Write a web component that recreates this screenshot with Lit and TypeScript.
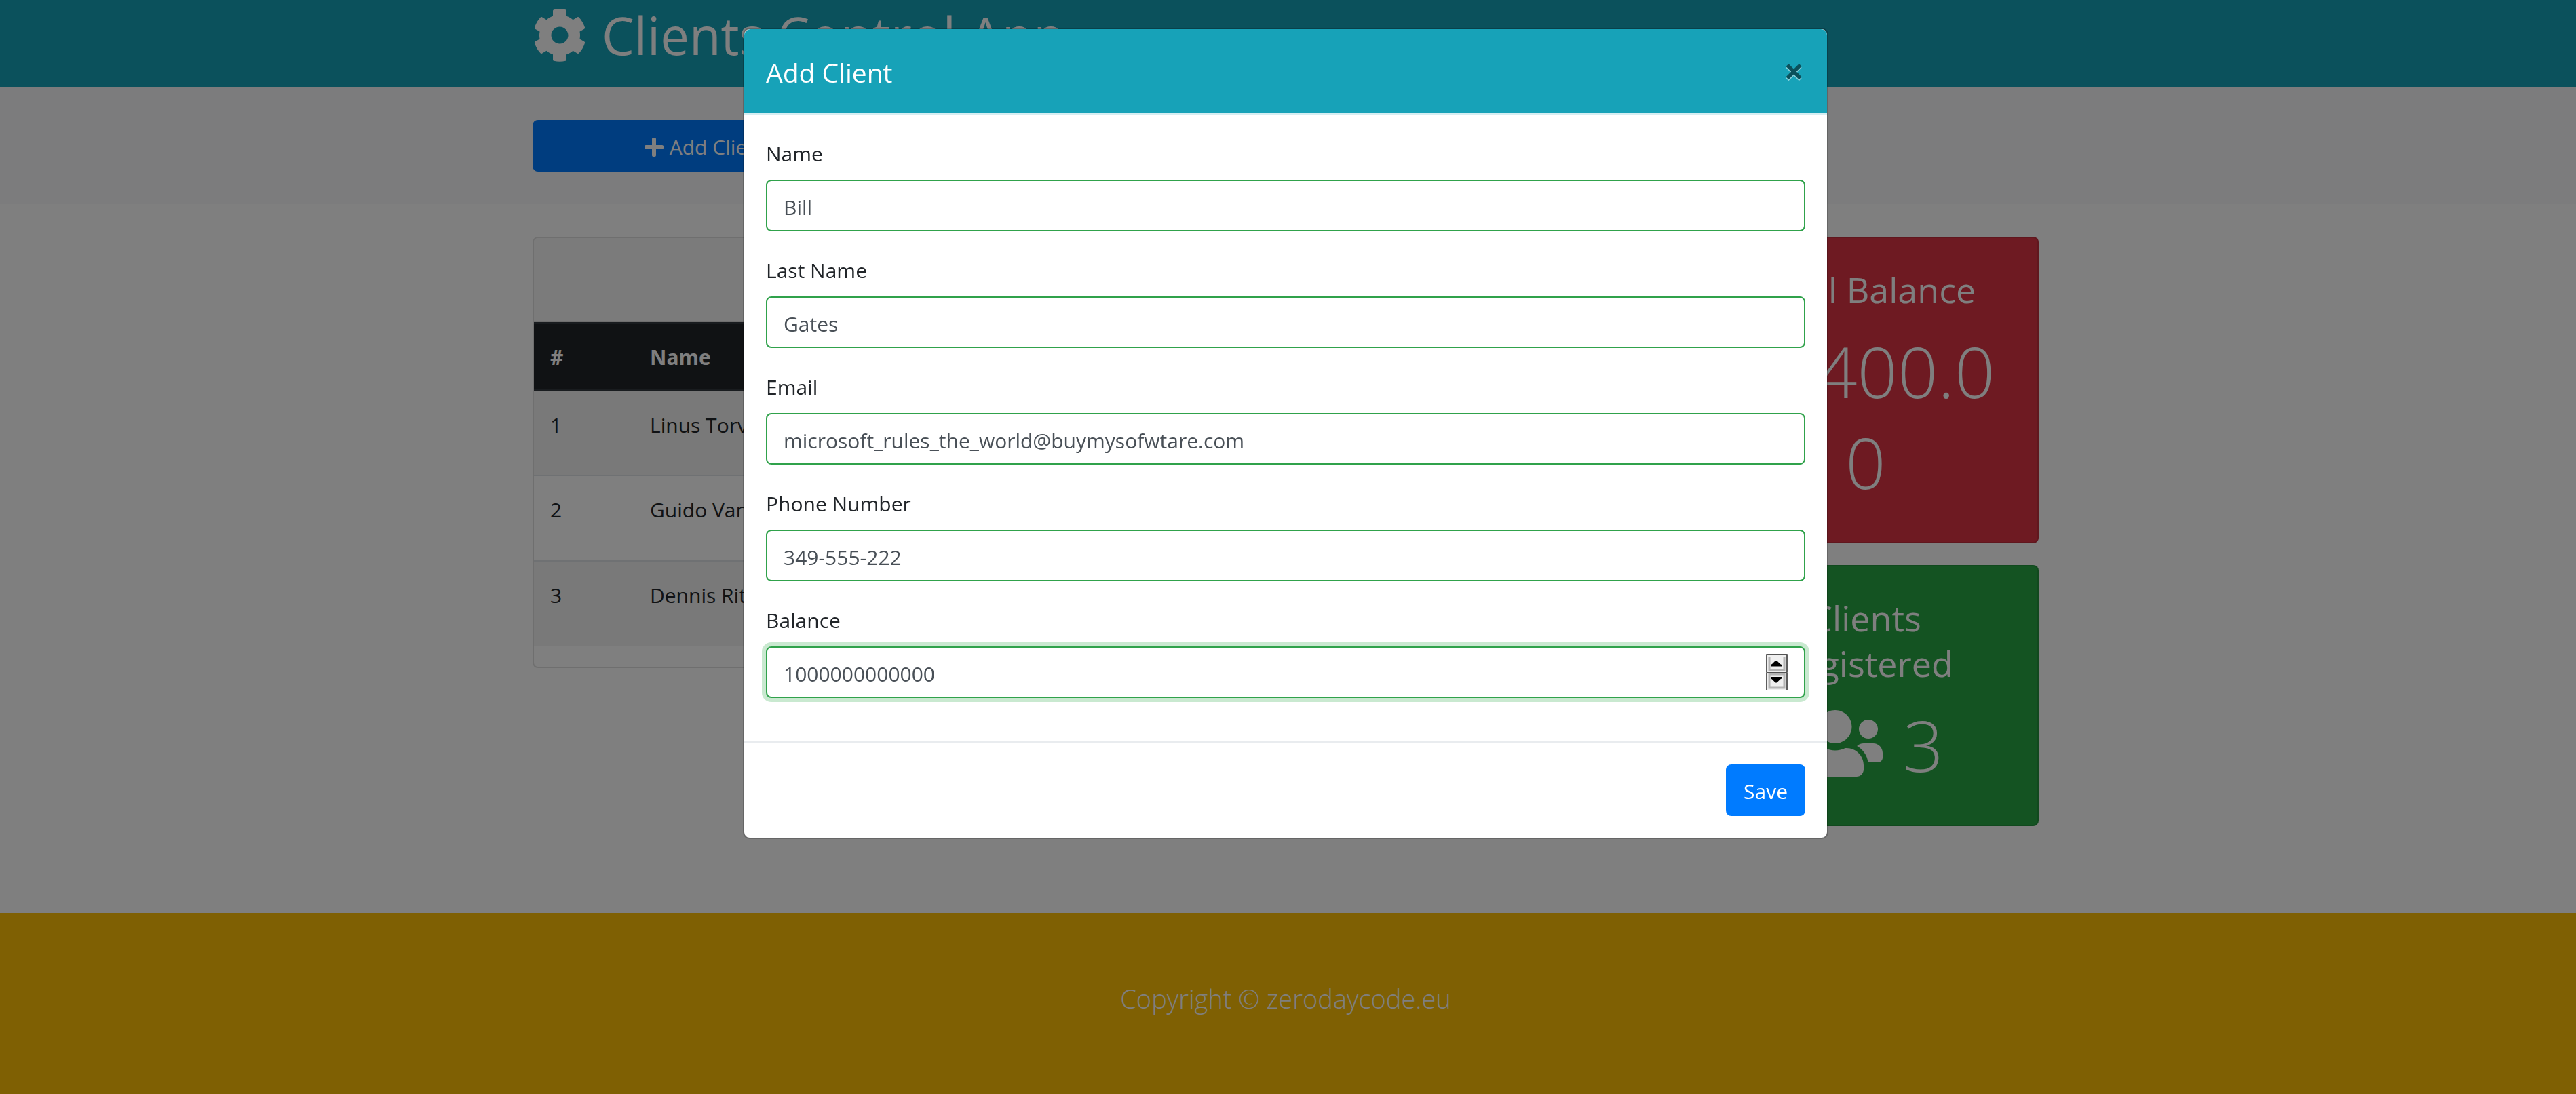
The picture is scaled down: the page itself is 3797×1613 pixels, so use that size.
import { LitElement, html, css, svg } from "lit";
import { customElement, state } from "lit/decorators.js";

interface Client {
  id: number;
  name: string;
  balance: string;
}

interface Field {
  id: string;
  label: string;
  type: string;
  value: string;
}

const CLIENTS: Client[] = [
  { id: 1, name: "Linus Torvalds", balance: "5000.00" },
  { id: 2, name: "Guido Van Rossum", balance: "4400.00" },
  { id: 3, name: "Dennis Ritchie", balance: "6000.00" },
];

const FIELDS: Field[] = [
  { id: "name", label: "Name", type: "text", value: "Bill" },
  { id: "last-name", label: "Last Name", type: "text", value: "Gates" },
  { id: "email", label: "Email", type: "email", value: "microsoft_rules_the_world@buymysofwtare.com" },
  { id: "phone", label: "Phone Number", type: "tel", value: "349-555-222" },
];

const cog = svg`<path d="M487.4 315.7l-42.6-24.6c4.3-23.2 4.3-47 0-70.2l42.6-24.6c4.9-2.8 7.1-8.6 5.5-14-11.1-35.6-30-67.8-54.7-94.6-3.8-4.1-10-5.1-14.8-2.3L380.8 110c-17.9-15.4-38.5-27.3-60.8-35.1V25.8c0-5.6-3.9-10.5-9.4-11.7-36.7-8.2-74.3-7.8-109.2 0-5.5 1.2-9.4 6.1-9.4 11.7V75c-22.2 7.9-42.8 19.8-60.8 35.1L88.7 85.5c-4.9-2.8-11-1.9-14.8 2.3-24.7 26.7-43.6 58.9-54.7 94.6-1.7 5.4.6 11.2 5.5 14L67.3 221c-4.3 23.2-4.3 47 0 70.2l-42.6 24.6c-4.9 2.8-7.1 8.6-5.5 14 11.1 35.6 30 67.8 54.7 94.6 3.8 4.1 10 5.1 14.8 2.3l42.6-24.6c17.9 15.4 38.5 27.3 60.8 35.1v49.2c0 5.6 3.9 10.5 9.4 11.7 36.7 8.2 74.3 7.8 109.2 0 5.5-1.2 9.4-6.1 9.4-11.7v-49.2c22.2-7.9 42.8-19.8 60.8-35.1l42.6 24.6c4.9 2.8 11 1.9 14.8-2.3 24.7-26.7 43.6-58.9 54.7-94.6 1.5-5.5-.7-11.3-5.6-14.1zM256 336c-44.1 0-80-35.9-80-80s35.9-80 80-80 80 35.9 80 80-35.9 80-80 80z"/>`;
const plus = svg`<path d="M416 208H272V64c0-17.67-14.33-32-32-32h-32c-17.67 0-32 14.33-32 32v144H32c-17.67 0-32 14.33-32 32v32c0 17.67 14.33 32 32 32h144v144c0 17.67 14.33 32 32 32h32c17.67 0 32-14.33 32-32V304h144c17.67 0 32-14.33 32-32v-32c0-17.67-14.33-32-32-32z"/>`;
const users = svg`<path d="M96 224c35.3 0 64-28.7 64-64s-28.7-64-64-64-64 28.7-64 64 28.7 64 64 64zm448 0c35.3 0 64-28.7 64-64s-28.7-64-64-64-64 28.7-64 64 28.7 64 64 64zm32 32h-64c-17.6 0-33.5 7.1-45.1 18.6 40.3 22.1 68.9 62 75.1 109.4h66c17.7 0 32-14.3 32-32v-32c0-35.3-28.7-64-64-64zm-256 0c61.9 0 112-50.1 112-112S381.9 32 320 32 208 82.1 208 144s50.1 112 112 112zm76.8 32h-8.3c-20.8 10-43.9 16-68.5 16s-47.6-6-68.5-16h-8.3C179.6 288 128 339.6 128 403.2V432c0 26.5 21.5 48 48 48h288c26.5 0 48-21.5 48-48v-28.8c0-63.6-51.6-115.2-115.2-115.2zm-223.7-13.4C161.5 263.1 145.6 256 128 256H64c-35.3 0-64 28.7-64 64v32c0 17.7 14.3 32 32 32h65.9c6.3-47.4 34.9-87.3 75.2-109.4z"/>`;

@customElement("app-root")
export class AppRoot extends LitElement {
  @state() private open = true;
  @state() private balance = 1000000000000;

  static styles = css`
    :host {
      display: flex;
      flex-direction: column;
      min-height: 100vh;
      box-sizing: border-box;
      background: #fff;
      color: #212529;
      font-family: "Open Sans", "Noto Sans", sans-serif;
      font-size: 30px;
      line-height: 48px;
    }
    *, *::before, *::after { box-sizing: border-box; }
    h1, h2, h3, p { margin: 0; font-weight: 400; }
    button, input { font: inherit; }
    svg { display: block; flex: none; fill: currentColor; }

    .band { padding-right: 7px; }
    .container { max-width: 2280px; margin: 0 auto; padding: 0 30px; }

    .masthead { background: #17a2b8; color: #fff; padding-top: 4px; padding-bottom: 29px; }
    .brand { display: flex; align-items: center; gap: 22px; font-size: 76px; line-height: 96px; }
    .brand svg { width: 80px; height: 80px; }

    .actions { background: #f8f9fa; padding-top: 48px; padding-bottom: 48px; }
    .columns { display: grid; grid-template-columns: repeat(4, 1fr); gap: 60px; align-items: start; }

    .btn {
      display: flex;
      align-items: center;
      justify-content: center;
      gap: 9px;
      padding: 14px 24px 10px;
      border: 2px solid #007bff;
      border-radius: 8px;
      background: #007bff;
      color: #fff;
      line-height: 48px;
    }
    .btn svg { width: 28px; height: 32px; }

    .content { padding-top: 48px; }
    .card { border: 2px solid rgba(0, 0, 0, 0.125); border-radius: 8px; overflow: hidden; }
    .listing { grid-column: span 3; padding-bottom: 30px; }
    .listing-head { background: #f7f7f7; border-bottom: 2px solid #dfdfdf; padding: 24px 40px 40px; text-align: center; }
    .listing-head h2 { font-size: 45px; line-height: 58px; }
    table { width: 100%; border-collapse: collapse; }
    th, td { padding: 26px 24px 22px; text-align: left; vertical-align: top; }
    th { background: #212529; color: #fff; border-top: 2px solid #32383e; border-bottom: 4px solid #32383e; }
    th:first-child { width: 147px; }
    td { height: 126px; border-top: 2px solid #dee2e6; }
    tbody tr:nth-child(odd) { background: #f2f2f2; }
    .details { display: inline-block; padding: 12px 24px; border-radius: 8px; background: #6c757d; color: #fff; text-decoration: none; }

    .stats { display: grid; gap: 32px; }
    .stat { padding: 40px; color: #fff; text-align: center; }
    .stat.total { background-color: #dc3545; }
    .stat.count { background-color: #28a745; }
    .stat h2 { font-size: 52px; line-height: 67px; padding-top: 2px; margin-bottom: 20px; }
    .figure { font-size: 104px; line-height: 134px; font-weight: 300; overflow-wrap: anywhere; margin-bottom: 11px; }
    .figure.tally { display: flex; justify-content: center; gap: 30px; }
    .tally svg { width: 140px; height: 112px; margin-top: 9px; }

    .site-footer { flex: 1; margin-top: 128px; background: #ffc107; color: #fff; text-align: center; padding-top: 96px; }
    .site-footer p { font-size: 38px; line-height: 60px; font-weight: 300; }

    .backdrop { position: fixed; inset: 0; background: rgba(0, 0, 0, 0.5); }
    .modal { position: fixed; inset: 0; padding: 41px 7px 0 0; display: flex; justify-content: center; align-items: flex-start; }
    .dialog {
      width: 1600px;
      max-width: 100%;
      background: #fff;
      background-clip: padding-box;
      border: 2px solid rgba(0, 0, 0, 0.2);
      border-radius: 10px;
    }
    .dialog-head {
      display: flex;
      justify-content: space-between;
      align-items: flex-start;
      padding: 34px 32px 30px;
      border-bottom: 2px solid #d6eef2;
      border-radius: 9px 9px 0 0;
      background: #17a2b8;
      color: #fff;
    }
    .dialog-head h2 { font-size: 39px; line-height: 60px; }
    .close {
      border: 0;
      background: none;
      padding: 32px;
      margin: -32px;
      width: 98px;
      font-size: 52px;
      line-height: 54px;
      font-weight: 700;
      color: #000;
      opacity: 0.5;
      text-shadow: 0 2px 0 #fff;
    }
    .dialog-body { padding: 32px; }
    .field { display: flex; flex-direction: column; gap: 14px; margin-bottom: 32px; }
    .field label { padding-top: 2px; }
    .field input {
      width: 100%;
      height: 76px;
      padding: 14px 24px 10px;
      border: 2px solid #30a24b;
      border-radius: 8px;
      background: #fff;
      color: #495057;
      outline: 0;
      appearance: textfield;
    }
    .field input[type="number"] { box-shadow: 0 0 0 6px rgba(40, 167, 69, 0.25); }
    .field input::-webkit-inner-spin-button { display: none; }
    .number { position: relative; display: flex; }
    .spinner { position: absolute; top: 11px; right: 26px; width: 32px; }
    .spinner button { display: block; border: 0; padding: 0; width: 32px; height: 27px; background: none; }
    .dialog-foot { display: flex; justify-content: flex-end; padding: 32px; border-top: 2px solid #e9ecef; }
  `;

  private close() {
    this.open = false;
  }

  private show() {
    this.open = true;
  }

  private step(amount: number) {
    this.balance += amount;
  }

  private dialog() {
    return html`
      <div class="backdrop"></div>
      <div class="modal" role="dialog" aria-modal="true" aria-labelledby="dialog-title">
        <form class="dialog" @submit=${(e: Event) => e.preventDefault()}>
          <header class="dialog-head">
            <h2 id="dialog-title">Add Client</h2>
            <button class="close" type="button" aria-label="Close" @click=${this.close}>×</button>
          </header>
          <div class="dialog-body">
            ${FIELDS.map(
              (f) => html`
                <div class="field">
                  <label for=${f.id}>${f.label}</label>
                  <input id=${f.id} type=${f.type} .value=${f.value} spellcheck="false" />
                </div>
              `
            )}
            <div class="field">
              <label for="balance">Balance</label>
              <div class="number">
                <input id="balance" type="number" .value=${String(this.balance)} />
                <div class="spinner">
                  <button type="button" aria-label="Increase" @click=${() => this.step(1)}>
                    <svg viewBox="0 0 32 27" width="32" height="27">
                      <path d="M0 0h32v27H0z" fill="#efefef" />
                      <path d="M5 4v20h22V4" fill="none" stroke="#b4b4b4" stroke-width="3" />
                      <path d="M1 27V1h30v26" fill="none" stroke="#222" stroke-width="1.4" />
                      <path d="M7 18.500v-2.500l2-1 5-5h2l5 5 2 1v2.500z" fill="#000" />
                    </svg>
                  </button>
                  <button type="button" aria-label="Decrease" @click=${() => this.step(-1)}>
                    <svg viewBox="0 0 32 27" width="32" height="27">
                      <path d="M0 0h32v27H0z" fill="#efefef" />
                      <path d="M5 3v20h22V3z" fill="none" stroke="#b4b4b4" stroke-width="3" />
                      <path d="M1 27V1h30v26" fill="none" stroke="#222" stroke-width="1.4" />
                      <path d="M7 7v2.500l2 1 5 5h2l5-5 2-1V7z" fill="#000" />
                    </svg>
                  </button>
                </div>
              </div>
            </div>
          </div>
          <footer class="dialog-foot">
            <button class="btn" type="submit">Save</button>
          </footer>
        </form>
      </div>
    `;
  }

  render() {
    return html`
      <header class="masthead band">
        <div class="container">
          <h1 class="brand"><svg viewBox="0 0 512 512" aria-hidden="true">${cog}</svg>Clients Control App</h1>
        </div>
      </header>
      <section class="actions band">
        <div class="container columns">
          <button class="btn" type="button" @click=${this.show}>
            <svg viewBox="0 0 448 512" aria-hidden="true">${plus}</svg>Add Client
          </button>
        </div>
      </section>
      <main class="content band">
        <div class="container columns">
          <section class="card listing">
            <header class="listing-head"><h2>Clients List</h2></header>
            <table>
              <thead>
                <tr><th>#</th><th>Name</th><th>Balance</th><th></th></tr>
              </thead>
              <tbody>
                ${CLIENTS.map(
                  (c) => html`<tr>
                    <td>${c.id}</td>
                    <td>${c.name}</td>
                    <td>${c.balance}</td>
                    <td><a class="details" href="#client-${c.id}">Edit</a></td>
                  </tr>`
                )}
              </tbody>
            </table>
          </section>
          <aside class="stats">
            <section class="card stat total">
              <h2>Total Balance</h2>
              <p class="figure">15400.00</p>
            </section>
            <section class="card stat count">
              <h2>Clients Registered</h2>
              <p class="figure tally"><svg viewBox="0 0 640 512" aria-hidden="true">${users}</svg>${CLIENTS.length}</p>
            </section>
          </aside>
        </div>
      </main>
      <footer class="site-footer band"><p>Copyright © zerodaycode.eu</p></footer>
      ${this.open ? this.dialog() : null}
    `;
  }
}
